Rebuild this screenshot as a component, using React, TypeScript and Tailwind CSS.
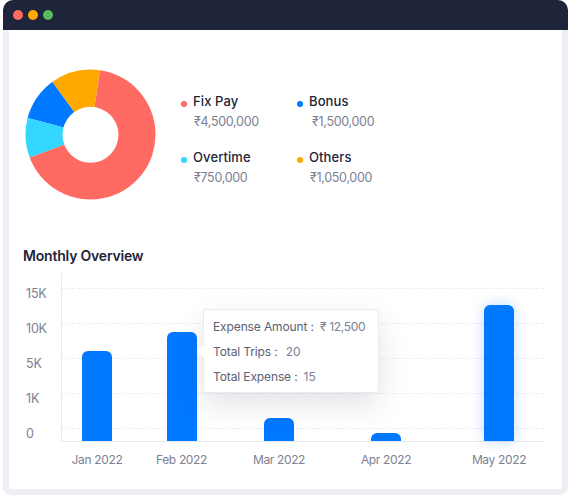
const slices = [
  { color: "#ff6b62", d: "M65.5 65.5 L74.9 1.2 A65 65 0 1 1 4.7 88.4 Z" },
  { color: "#ffa800", d: "M65.5 65.5 L27.3 12.9 A65 65 0 0 1 74.9 1.2 Z" },
  { color: "#0078ff", d: "M65.5 65.5 L2.6 49 A65 65 0 0 1 27.3 12.9 Z" },
  { color: "#33d6ff", d: "M65.5 65.5 L4.7 88.4 A65 65 0 0 1 2.6 49 Z" },
];

const legend = [
  { name: "Fix Pay", value: "₹4,500,000", dot: "bg-[#ff6b62]", valueClass: "pl-[13px]" },
  { name: "Bonus", value: "₹1,500,000", dot: "bg-[#0078ff]", valueClass: "pl-[15px]" },
  { name: "Overtime", value: "₹750,000", dot: "bg-[#33d6ff]", valueClass: "pl-[13px]" },
  { name: "Others", value: "₹1,050,000", dot: "bg-[#ffa800]", valueClass: "pl-[13px]" },
];

const yLabels = ["15K", "10K", "5K", "1K", "0"];

const months = [
  { label: "Jan 2022", height: 90, glow: false },
  { label: "Feb 2022", height: 109, glow: false },
  { label: "Mar 2022", height: 23, glow: false },
  { label: "Apr 2022", height: 8, glow: false },
  { label: "May 2022", height: 136, glow: true },
];

const columns = "grid grid-cols-[70px_99px_96px_118px_108px]";

export default function App() {
  return (
    <div className="w-[568px] h-[495px] bg-white pl-[3px] flex flex-col font-['Inter',sans-serif] overflow-hidden">
      <div className="h-[30px] shrink-0 bg-[#1e2439] rounded-t-[10px] flex items-center gap-[5px] pl-[10px]">
        <span className="w-[10px] h-[10px] rounded-full bg-[#ff6b62]" />
        <span className="w-[10px] h-[10px] rounded-full bg-[#ffa800]" />
        <span className="w-[10px] h-[10px] rounded-full bg-[#5cb85c]" />
      </div>
      <div className="flex-1 border-x-[6px] border-b-[6px] border-[#eef0f5] rounded-b-[8px] flex flex-col">
        <div className="flex items-start pt-[39px] pl-[16px]">
          <svg width="131" height="131" viewBox="0 0 131 131" className="shrink-0">
            {slices.map((s) => (
              <path key={s.color} d={s.d} fill={s.color} />
            ))}
            <circle cx="65.5" cy="65.8" r="28" fill="#ffffff" />
          </svg>
          <div className="ml-[25px] mt-[23px] grid grid-cols-[116px_116px] grid-rows-[55.5px_55.5px]">
            {legend.map((l) => (
              <div key={l.name} className="flex flex-col">
                <div className="flex items-center gap-[6px] h-[20px]">
                  <span className={`w-[6px] h-[6px] rounded-full mt-[4px] ${l.dot}`} />
                  <span className="text-[13px] font-medium text-[#1e2439] tracking-[0.1px]">{l.name}</span>
                </div>
                <span className={`leading-[20px] text-[12.5px] text-[#7b8192] tracking-[-0.3px] ${l.valueClass}`}>
                  {l.value}
                </span>
              </div>
            ))}
          </div>
        </div>

        <h2 className="ml-[14px] mt-[43px] text-[14px] leading-[20px] font-semibold text-[#1e2439] tracking-[-0.2px]">
          Monthly Overview
        </h2>

        <div className="flex mt-[7px] ml-[16px]">
          <div className="w-[36px] h-[168px] pt-[4px] pl-[1px] flex flex-col text-[12.5px] text-[#7b8192]">
            {yLabels.map((y) => (
              <span key={y} className="h-[35px] shrink-0 flex items-center tracking-[-0.2px]">
                {y}
              </span>
            ))}
          </div>
          <div className="flex flex-col">
            <div className="relative w-[483px] h-[169px] border-l border-b border-[#e8eaf0]">
              <div className="absolute inset-0 pt-[15px] flex flex-col gap-[34px]">
                {yLabels.map((y) => (
                  <div key={y} className="h-px border-t border-dashed border-[#eceef3]" />
                ))}
              </div>
              <div className={`relative h-full items-end ${columns}`}>
                {months.map((m) => (
                  <div key={m.label} className="flex justify-center items-end h-full">
                    <div
                      className={`w-[30px] bg-[#0078ff] rounded-t-[6px] ${m.glow ? "shadow-[0_0_14px_rgba(0,120,255,0.25)]" : ""}`}
                      style={{ height: m.height }}
                    />
                  </div>
                ))}
              </div>
              <div className="absolute left-[141px] top-[36px] w-[176px] h-[84px] bg-white border border-[#e9ebf0] rounded-[3px] shadow-[0_12px_30px_rgba(30,36,57,0.12)] pl-[9px] pt-[4px] text-[12px] text-[#5b6172] flex flex-col">
                <span className="absolute left-[-5px] top-[37px] w-[9px] h-[9px] bg-white rotate-45" />
                <div className="h-[25px] flex items-center gap-[6px]">
                  <span className="tracking-[-0.12px]">Expense Amount :</span>
                  <span className="text-[#7b8192] tracking-[-0.3px]">₹ 12,500</span>
                </div>
                <div className="h-[25px] flex items-center gap-[8px]">
                  <span className="tracking-[-0.12px]">Total Trips :</span>
                  <span className="text-[#7b8192]">20</span>
                </div>
                <div className="h-[25px] flex items-center gap-[6px]">
                  <span className="tracking-[-0.12px]">Total Expense :</span>
                  <span className="text-[#7b8192]">15</span>
                </div>
              </div>
            </div>
            <div className={`mt-[9px] ml-[1px] ${columns}`}>
              {months.map((m) => (
                <span key={m.label} className="text-center text-[12px] leading-[18px] text-[#7b8192] tracking-[-0.35px] whitespace-nowrap">
                  {m.label}
                </span>
              ))}
            </div>
          </div>
        </div>
      </div>
    </div>
  );
}
